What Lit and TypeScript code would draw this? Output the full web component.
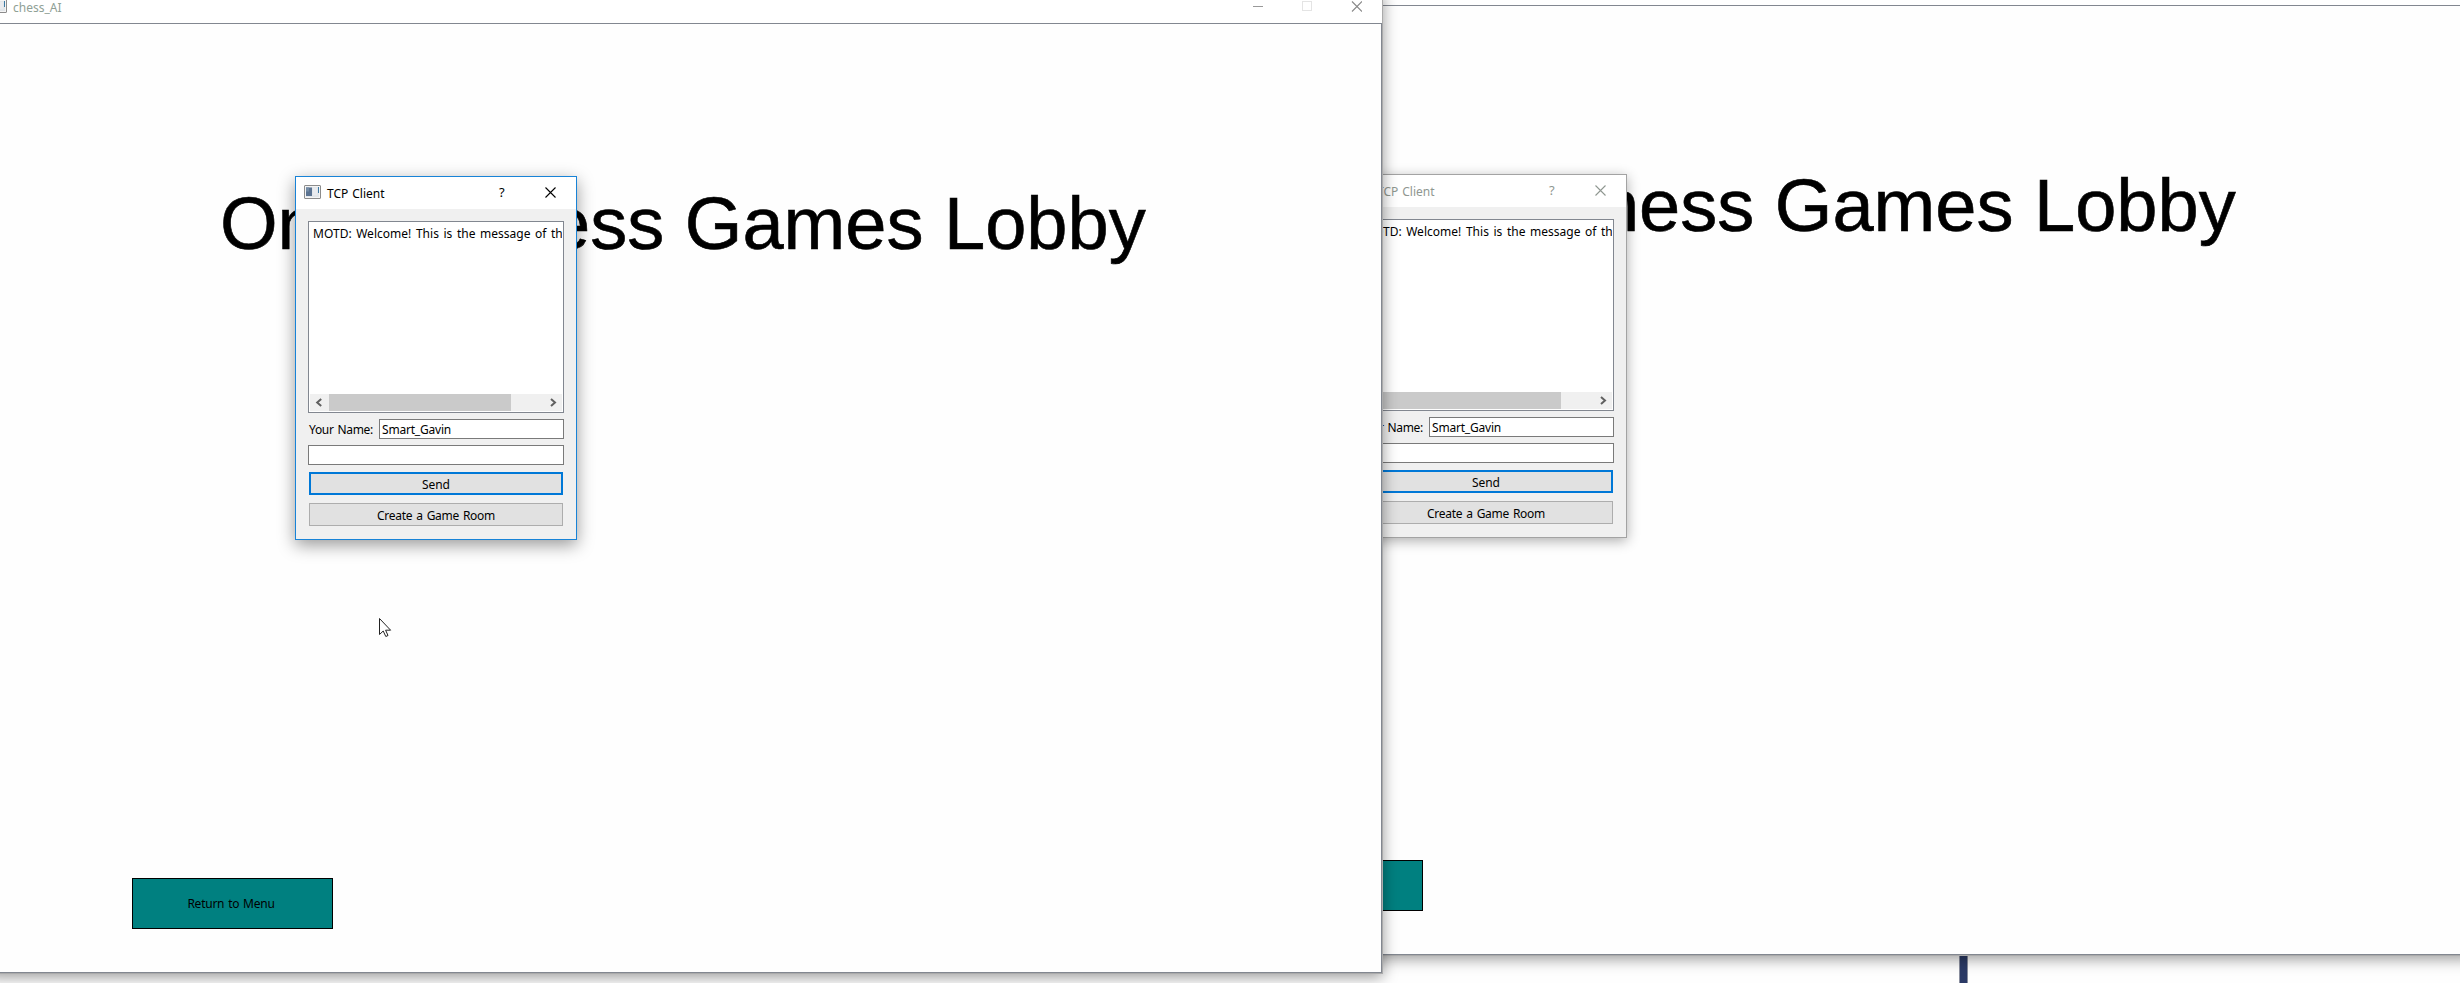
import { LitElement, html, css, svg } from "lit";
import { customElement, property } from "lit/decorators.js";

const appIcon = svg`
  <rect x="0.5" y="0.5" width="16" height="13" rx="0.5" fill="#f4f4f4" stroke="#8c8c8c"/>
  <rect x="2" y="2" width="13" height="10" fill="#e2e6ea"/>
  <rect x="2" y="2.5" width="6" height="8.5" fill="#5b7391"/>
  <rect x="2" y="2.5" width="3" height="4" fill="#738ba5"/>
  <rect x="9" y="3" width="4" height="7" fill="#e9ebef"/>
  <rect x="14" y="2" width="1" height="6" fill="#3c7aa5"/>`;

@customElement("tcp-dialog")
export class TcpDialog extends LitElement {
  @property({ type: Boolean, reflect: true }) active = false;

  static styles = css`
    :host {
      box-sizing: border-box;
      display: flex;
      flex-direction: column;
      width: 282px;
      height: 364px;
      border: 1px solid #a3a3a3;
      background: #f0f0f0;
      box-shadow: 0 3px 12px rgba(0, 0, 0, 0.32);
      font: 12px/16px "Noto Sans", sans-serif;
      color: #000;
      --ink: #8f9791;
    }
    :host([active]) {
      border-color: #1883d7;
      box-shadow: 0 5px 16px rgba(0, 0, 0, 0.4);
      --ink: #000;
    }
    .bar {
      display: flex;
      height: 32px;
      flex: none;
      background: #fff;
      color: var(--ink);
      padding-left: 8px;
    }
    .icon { margin-top: 8px; flex: none; }
    .name {
      margin: 9px 0 0 6px;
      flex: 1;
      white-space: nowrap;
      word-spacing: 0.8px;
    }
    .help { margin: 7px 40px 0 0; font-size: 13px; width: 6px; }
    .close { margin: 10px 20px 0 0; flex: none; }
    .body {
      display: flex;
      flex-direction: column;
      padding: 12px 12px 0;
    }
    .list {
      box-sizing: border-box;
      height: 192px;
      padding: 1px;
      border: 1px solid #828790;
      background: #fff;
      display: flex;
      flex-direction: column;
      overflow: hidden;
    }
    .line {
      flex: 1;
      padding: 3px 0 0 3px;
      white-space: nowrap;
      overflow: hidden;
      word-spacing: 1.4px;
      letter-spacing: 0.02px;
    }
    .scroll {
      display: flex;
      justify-content: space-between;
      height: 17px;
      background: #f0f0f0;
    }
    .thumb { width: 182px; margin-right: 34px; background: #cacaca; }
    .row { display: flex; justify-content: space-between; margin-top: 6px; }
    .label {
      padding: 3px 0 0 1px;
      height: 17px;
      white-space: nowrap;
      word-spacing: 1px;
      letter-spacing: -0.3px;
    }
    .field {
      box-sizing: border-box;
      height: 20px;
      border: 1px solid #7a7a7a;
      background: #fff;
      padding: 2px 0 0 2px;
      letter-spacing: -0.2px;
      line-height: 16px;
    }
    .short { width: 185px; }
    .wide { margin-top: 6px; }
    .btn {
      box-sizing: border-box;
      height: 23px;
      margin: 7px 1px 0;
      border: 1px solid #adadad;
      background: #e1e1e1;
      text-align: center;
      padding-top: 4px;
      word-spacing: 1.2px;
      letter-spacing: -0.3px;
    }
    .default { border: 2px solid #0078d7; padding-top: 3px; letter-spacing: -0.1px; }
    .second { margin-top: 8px; }
  `;

  render() {
    return html`
      <div class="bar">
        <svg class="icon" width="17" height="14">${appIcon}</svg>
        <div class="name">TCP Client</div>
        <div class="help">?</div>
        <svg class="close" width="11" height="11" stroke="var(--ink)" stroke-width="1.1">
          <path d="M.5 .5L10.5 10.5M10.5 .5L.5 10.5" />
        </svg>
      </div>
      <div class="body">
        <div class="list">
          <div class="line">MOTD: Welcome! This is the message of the day</div>
          <div class="scroll">
            <svg width="19" height="17" fill="none" stroke="#606060" stroke-width="2">
              <path d="M11.2 5L7.2 8.5L11.2 12" />
            </svg>
            <div class="thumb"></div>
            <svg width="17" height="17" fill="none" stroke="#606060" stroke-width="2">
              <path d="M6 5L10 8.5L6 12" />
            </svg>
          </div>
        </div>
        <div class="row">
          <div class="label">Your Name:</div>
          <div class="field short">Smart_Gavin</div>
        </div>
        <div class="field wide"></div>
        <div class="btn default">Send</div>
        <div class="btn second">Create a Game Room</div>
      </div>
    `;
  }
}

@customElement("lobby-window")
export class LobbyWindow extends LitElement {
  static styles = css`
    :host {
      box-sizing: border-box;
      display: flex;
      flex-direction: column;
      width: 1395px;
      height: 982px;
      border: 1px solid #aaa;
      background: #fff;
      box-shadow: 0 3px 14px rgba(0, 0, 0, 0.4);
      font: 12px/16px "Noto Sans", sans-serif;
    }
    .bar { display: flex; height: 30px; flex: none; color: #8fa095; padding-left: 1px; }
    .icon { margin-top: 6px; }
    .name { flex: 1; margin: 7px 0 0 6px; }
    .controls { margin: 8px 20px 0 0; }
    .client {
      box-sizing: border-box;
      flex: 1;
      border: 1px solid #828790;
      background: #fefefe;
      display: flex;
      flex-direction: column;
      align-items: flex-start;
    }
    .title {
      margin: 155px 0 0 230px;
      font: 74.1px/90px "Liberation Sans", Arial, sans-serif;
      letter-spacing: -0.04px;
      -webkit-text-stroke: 0.6px #000;
      color: #000;
      white-space: nowrap;
    }
    .back {
      box-sizing: border-box;
      width: 201px;
      height: 51px;
      margin: auto 0 43px 142px;
      border: 1px solid #000;
      background: #008080;
      color: #000;
      display: flex;
      align-items: center;
      justify-content: center;
      padding-right: 3px;
      word-spacing: 1px;
      letter-spacing: -0.25px;
    }
  `;

  render() {
    return html`
      <div class="bar">
        <svg class="icon" width="17" height="14">${appIcon}</svg>
        <div class="name">chess_AI</div>
        <svg class="controls" width="110" height="11" fill="none">
          <path d="M1 5.5H11" stroke="#999" />
          <rect x="50.5" y=".5" width="9" height="9" stroke="#e4e4e4" />
          <path d="M100 .5L110 10.5M110 .5L100 10.5" stroke="#888" stroke-width="1.1" />
        </svg>
      </div>
      <div class="client">
        <div class="title">Online Chess Games Lobby</div>
        <div class="back">Return to Menu</div>
      </div>
    `;
  }
}

@customElement("app-root")
export class AppRoot extends LitElement {
  static styles = css`
    :host {
      display: block;
      position: relative;
      width: 2460px;
      height: 983px;
      overflow: hidden;
      background: #fefefe;
    }
    .strip {
      position: absolute;
      box-sizing: border-box;
      left: 1959px;
      top: 940px;
      width: 9px;
      height: 43px;
      background: #2b3a66;
      border: solid #8a8f9f;
      border-width: 0 1px;
    }
    .item { position: absolute; }
    .back-window { left: 1078px; top: -26px; }
    .back-dialog { left: 1345px; top: 174px; }
    .front-window { left: -12px; top: -8px; }
    .front-dialog { left: 295px; top: 176px; }
    .cursor { left: 379px; top: 618px; }
  `;

  render() {
    return html`
      <div class="strip"></div>
      <lobby-window class="item back-window"></lobby-window>
      <tcp-dialog class="item back-dialog"></tcp-dialog>
      <lobby-window class="item front-window"></lobby-window>
      <tcp-dialog class="item front-dialog" active></tcp-dialog>
      <svg class="item cursor" width="13" height="20">
        <path d="M.5 .5V16.5L4.2 13L6.8 18.5L9 17.5L6.6 12.2H11.6Z" fill="#fff" stroke="#222" />
      </svg>
    `;
  }
}
